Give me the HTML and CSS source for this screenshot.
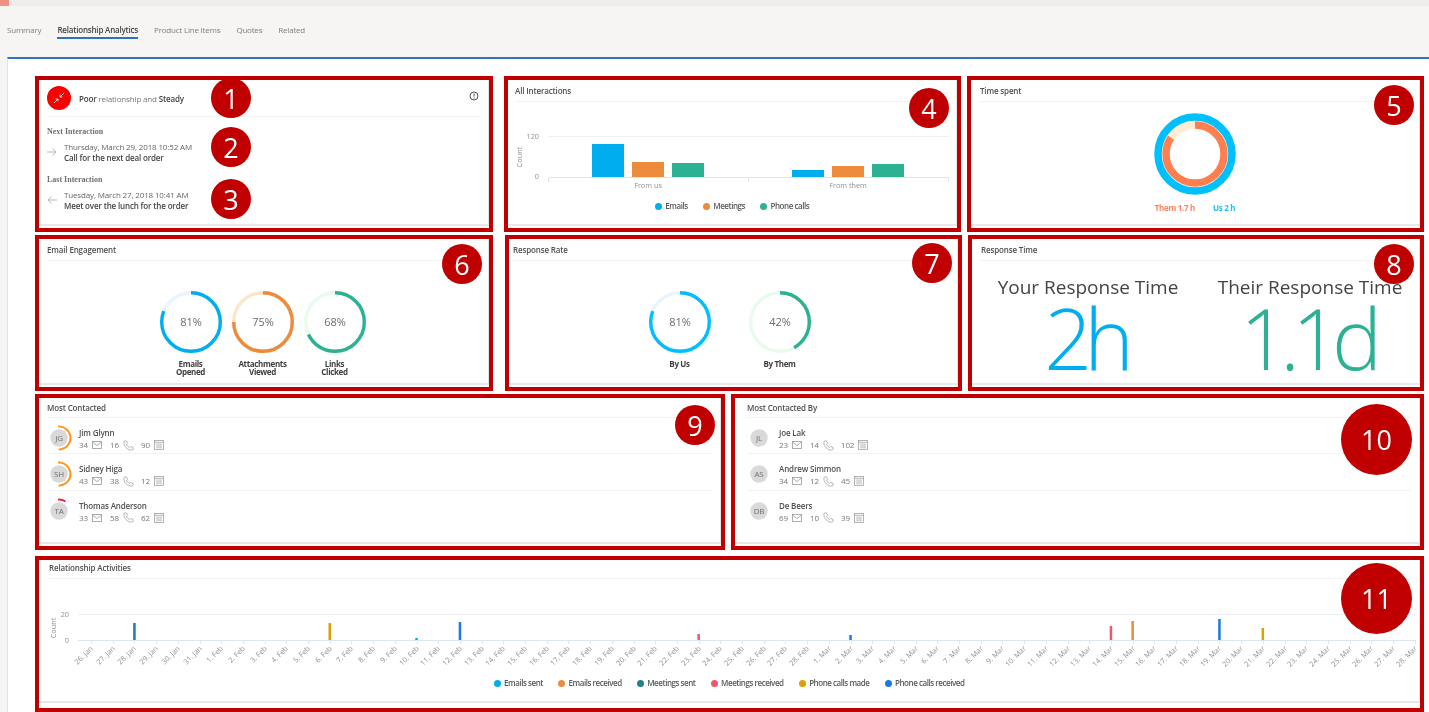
FILE: index.html
```html
<!DOCTYPE html>
<html lang="en">
<head>
    <meta charset="UTF-8">
    <title>Relationship Analytics</title>
    <link rel="stylesheet" href="styles.css">
</head>
<body>

    <svg class="sprite" aria-hidden="true">
        <symbol id="icon-mail" viewBox="0 0 10 8">
            <rect x="0.5" y="0.5" width="9" height="7"></rect>
            <path d="M0.5 1 L5 4.6 L9.5 1"></path>
        </symbol>
        <symbol id="icon-phone" viewBox="0 0 12 12">
            <path d="M2 1 L3.8 1 L5 3.6 L3.8 4.8 C4.5 6.4 5.6 7.5 7.2 8.2 L8.4 7 L11 8.2 L11 10 C11 10.6 10 11 9 11 C5 11 1 7 1 3 C1 2 1.4 1 2 1 Z"></path>
        </symbol>
        <symbol id="icon-calendar" viewBox="0 0 11 11">
            <rect x="0.5" y="0.5" width="10" height="10"></rect>
            <path d="M0.5 2.5 H10.5"></path>
            <path class="calendar-grid" d="M2 4.5 H9 M2 6.5 H9 M2 8.5 H9 M3.5 4 V9 M5.5 4 V9 M7.5 4 V9"></path>
        </symbol>
    </svg>

    <div class="topbar"><span class="topbar-mark"></span></div>

    <nav class="tabs">
        <a>Summary</a>
        <a class="active">Relationship Analytics</a>
        <a>Product Line Items</a>
        <a>Quotes</a>
        <a>Related</a>
    </nav>

    <main class="panel">

        <div class="row row-one">
            <section class="frame frame-health">
                <div class="card">
                    <div class="health-head">
                        <span class="health-icon">
                            <svg width="12" height="12" viewBox="0 0 12 12"><path d="M11 1 L7 5 M7 2.6 V5 H9.4 M1 11 L5 7 M2.6 7 H5 V9.4"></path></svg>
                        </span>
                        <p class="health-text"><b>Poor</b> relationship and <b>Steady</b></p>
                        <svg class="info-icon" width="10" height="10" viewBox="0 0 10 10">
                            <circle cx="5" cy="5" r="4"></circle>
                            <path d="M5 2.6 V5.6 M5 6.6 V7.6"></path>
                        </svg>
                    </div>
                    <h4 class="interaction-label">Next Interaction</h4>
                    <div class="interaction">
                        <svg class="arrow" width="10" height="8" viewBox="0 0 10 8"><path d="M0 4 H9 M5.6 0.5 L9 4 L5.6 7.5"></path></svg>
                        <div>
                            <p class="interaction-date">Thursday, March 29, 2018 10:52 AM</p>
                            <p class="interaction-title">Call for the next deal order</p>
                        </div>
                    </div>
                    <h4 class="interaction-label">Last Interaction</h4>
                    <div class="interaction">
                        <svg class="arrow" width="10" height="8" viewBox="0 0 10 8"><path d="M10 4 H1 M4.4 0.5 L1 4 L4.4 7.5"></path></svg>
                        <div>
                            <p class="interaction-date">Tuesday, March 27, 2018 10:41 AM</p>
                            <p class="interaction-title">Meet over the lunch for the order</p>
                        </div>
                    </div>
                </div>
                <span class="badge badge-1">1</span>
                <span class="badge badge-2">2</span>
                <span class="badge badge-3">3</span>
            </section>

            <section class="frame frame-all">
                <div class="card">
                    <h3 class="card-title">All Interactions</h3>
                    <svg class="chart" width="449" height="99" viewBox="508 103 449 99">
                        <path class="grid" d="M548 137.5 H949"></path>
                        <path class="axis" d="M548 178.5 H949 M548.5 178 V183 M748.5 178 V183 M948.5 178 V183"></path>
                        <rect class="fill-blue" x="592" y="145" width="32" height="33"></rect>
                        <rect class="fill-orange" x="632" y="163" width="32" height="15"></rect>
                        <rect class="fill-green" x="672" y="164" width="32" height="14"></rect>
                        <rect class="fill-blue" x="792" y="171" width="32" height="7"></rect>
                        <rect class="fill-orange" x="832" y="167" width="32" height="11"></rect>
                        <rect class="fill-green" x="872" y="165" width="32" height="13"></rect>
                        <text class="tick" x="539" y="140" text-anchor="end">120</text>
                        <text class="tick" x="539" y="180" text-anchor="end">0</text>
                        <text class="tick" transform="translate(522 158) rotate(-90)" text-anchor="middle">Count</text>
                        <text class="tick" x="648" y="189" text-anchor="middle">From us</text>
                        <text class="tick" x="848" y="189" text-anchor="middle">From them</text>
                    </svg>
                    <ul class="legend">
                        <li><i class="dot bg-blue"></i>Emails</li>
                        <li><i class="dot bg-orange"></i>Meetings</li>
                        <li><i class="dot bg-green"></i>Phone calls</li>
                    </ul>
                </div>
                <span class="badge badge-4">4</span>
            </section>

            <section class="frame frame-time">
                <div class="card">
                    <h3 class="card-title">Time spent</h3>
                    <svg class="donut" width="84" height="84" viewBox="0 0 84 84">
                        <circle class="donut-us" cx="42" cy="42" r="37"></circle>
                        <circle class="donut-track" cx="42" cy="42" r="29"></circle>
                        <circle class="donut-them" cx="42" cy="42" r="29" pathLength="100" stroke-dasharray="84.5 100"></circle>
                    </svg>
                    <div class="time-legend">
                        <span class="time-them">Them 1.7 h</span>
                        <span class="time-us">Us 2 h</span>
                    </div>
                </div>
                <span class="badge badge-5">5</span>
            </section>
        </div>

        <div class="row row-two">
            <section class="frame frame-email">
                <div class="card">
                    <h3 class="card-title">Email Engagement</h3>
                    <div class="gauges">
                        <figure class="gauge">
                            <svg width="62" height="62" viewBox="0 0 62 62">
                                <circle class="gauge-track track-blue" cx="31" cy="31" r="29.3"></circle>
                                <circle class="gauge-value stroke-blue" cx="31" cy="31" r="29.3" pathLength="100" stroke-dasharray="81 100"></circle>
                                <text x="31" y="35">81%</text>
                            </svg>
                            <figcaption>Emails<br>Opened</figcaption>
                        </figure>
                        <figure class="gauge">
                            <svg width="62" height="62" viewBox="0 0 62 62">
                                <circle class="gauge-track track-orange" cx="31" cy="31" r="29.3"></circle>
                                <circle class="gauge-value stroke-orange" cx="31" cy="31" r="29.3" pathLength="100" stroke-dasharray="75 100"></circle>
                                <text x="31" y="35">75%</text>
                            </svg>
                            <figcaption>Attachments<br>Viewed</figcaption>
                        </figure>
                        <figure class="gauge">
                            <svg width="62" height="62" viewBox="0 0 62 62">
                                <circle class="gauge-track track-green" cx="31" cy="31" r="29.3"></circle>
                                <circle class="gauge-value stroke-green" cx="31" cy="31" r="29.3" pathLength="100" stroke-dasharray="68 100"></circle>
                                <text x="31" y="35">68%</text>
                            </svg>
                            <figcaption>Links<br>Clicked</figcaption>
                        </figure>
                    </div>
                </div>
                <span class="badge badge-6">6</span>
            </section>

            <section class="frame frame-rate">
                <div class="card">
                    <h3 class="card-title">Response Rate</h3>
                    <div class="gauges gauges-wide">
                        <figure class="gauge">
                            <svg width="62" height="62" viewBox="0 0 62 62">
                                <circle class="gauge-track track-blue" cx="31" cy="31" r="29.3"></circle>
                                <circle class="gauge-value stroke-sky" cx="31" cy="31" r="29.3" pathLength="100" stroke-dasharray="81 100"></circle>
                                <text x="31" y="35">81%</text>
                            </svg>
                            <figcaption>By Us</figcaption>
                        </figure>
                        <figure class="gauge">
                            <svg width="62" height="62" viewBox="0 0 62 62">
                                <circle class="gauge-track track-green" cx="31" cy="31" r="29.3"></circle>
                                <circle class="gauge-value stroke-green" cx="31" cy="31" r="29.3" pathLength="100" stroke-dasharray="42 100"></circle>
                                <text x="31" y="35">42%</text>
                            </svg>
                            <figcaption>By Them</figcaption>
                        </figure>
                    </div>
                </div>
                <span class="badge badge-7">7</span>
            </section>

            <section class="frame frame-response">
                <div class="card">
                    <h3 class="card-title">Response Time</h3>
                    <div class="response-cols">
                        <div>
                            <p class="response-label">Your Response Time</p>
                            <p class="response-value text-blue">2h</p>
                        </div>
                        <div>
                            <p class="response-label">Their Response Time</p>
                            <p class="response-value text-green">1.1d</p>
                        </div>
                    </div>
                </div>
                <span class="badge badge-8">8</span>
            </section>
        </div>

        <div class="row row-three">
            <section class="frame frame-contacted">
                <div class="card">
                    <h3 class="card-title">Most Contacted</h3>
                    <ul class="people">
                        <li class="person">
                            <svg class="avatar" width="30" height="30" viewBox="0 0 30 30">
                                <circle class="avatar-bg" cx="15" cy="15" r="8.7"></circle>
                                <circle class="avatar-arc arc-orange" cx="15" cy="15" r="11.5" pathLength="100" stroke-dasharray="52 100"></circle>
                                <text x="15" y="18">JG</text>
                            </svg>
                            <div>
                                <p class="person-name">Jim Glynn</p>
                                <div class="stats">
                                    <span class="stat">34<svg width="10" height="8"><use href="#icon-mail"></use></svg></span>
                                    <span class="stat">16<svg width="11" height="11"><use href="#icon-phone"></use></svg></span>
                                    <span class="stat">90<svg width="10" height="10"><use href="#icon-calendar"></use></svg></span>
                                </div>
                            </div>
                        </li>
                        <li class="person">
                            <svg class="avatar" width="30" height="30" viewBox="0 0 30 30">
                                <circle class="avatar-bg" cx="15" cy="15" r="8.7"></circle>
                                <circle class="avatar-arc arc-orange" cx="15" cy="15" r="11.5" pathLength="100" stroke-dasharray="52 100"></circle>
                                <text x="15" y="18">SH</text>
                            </svg>
                            <div>
                                <p class="person-name">Sidney Higa</p>
                                <div class="stats">
                                    <span class="stat">43<svg width="10" height="8"><use href="#icon-mail"></use></svg></span>
                                    <span class="stat">38<svg width="11" height="11"><use href="#icon-phone"></use></svg></span>
                                    <span class="stat">12<svg width="10" height="10"><use href="#icon-calendar"></use></svg></span>
                                </div>
                            </div>
                        </li>
                        <li class="person">
                            <svg class="avatar" width="30" height="30" viewBox="0 0 30 30">
                                <circle class="avatar-bg" cx="15" cy="15" r="8.7"></circle>
                                <circle class="avatar-arc arc-red" cx="15" cy="15" r="11.5" pathLength="100" stroke-dasharray="11 100"></circle>
                                <text x="15" y="18">TA</text>
                            </svg>
                            <div>
                                <p class="person-name">Thomas Anderson</p>
                                <div class="stats">
                                    <span class="stat">33<svg width="10" height="8"><use href="#icon-mail"></use></svg></span>
                                    <span class="stat">58<svg width="11" height="11"><use href="#icon-phone"></use></svg></span>
                                    <span class="stat">62<svg width="10" height="10"><use href="#icon-calendar"></use></svg></span>
                                </div>
                            </div>
                        </li>
                    </ul>
                </div>
                <span class="badge badge-9">9</span>
            </section>

            <section class="frame frame-contacted-by">
                <div class="card">
                    <h3 class="card-title">Most Contacted By</h3>
                    <ul class="people">
                        <li class="person">
                            <svg class="avatar" width="30" height="30" viewBox="0 0 30 30">
                                <circle class="avatar-bg" cx="15" cy="15" r="8.7"></circle>
                                <text x="15" y="18">JL</text>
                            </svg>
                            <div>
                                <p class="person-name">Joe Lak</p>
                                <div class="stats">
                                    <span class="stat">23<svg width="10" height="8"><use href="#icon-mail"></use></svg></span>
                                    <span class="stat">14<svg width="11" height="11"><use href="#icon-phone"></use></svg></span>
                                    <span class="stat">102<svg width="10" height="10"><use href="#icon-calendar"></use></svg></span>
                                </div>
                            </div>
                        </li>
                        <li class="person">
                            <svg class="avatar" width="30" height="30" viewBox="0 0 30 30">
                                <circle class="avatar-bg" cx="15" cy="15" r="8.7"></circle>
                                <text x="15" y="18">AS</text>
                            </svg>
                            <div>
                                <p class="person-name">Andrew Simmon</p>
                                <div class="stats">
                                    <span class="stat">34<svg width="10" height="8"><use href="#icon-mail"></use></svg></span>
                                    <span class="stat">12<svg width="11" height="11"><use href="#icon-phone"></use></svg></span>
                                    <span class="stat">45<svg width="10" height="10"><use href="#icon-calendar"></use></svg></span>
                                </div>
                            </div>
                        </li>
                        <li class="person">
                            <svg class="avatar" width="30" height="30" viewBox="0 0 30 30">
                                <circle class="avatar-bg" cx="15" cy="15" r="8.7"></circle>
                                <text x="15" y="18">DB</text>
                            </svg>
                            <div>
                                <p class="person-name">De Beers</p>
                                <div class="stats">
                                    <span class="stat">69<svg width="10" height="8"><use href="#icon-mail"></use></svg></span>
                                    <span class="stat">10<svg width="11" height="11"><use href="#icon-phone"></use></svg></span>
                                    <span class="stat">39<svg width="10" height="10"><use href="#icon-calendar"></use></svg></span>
                                </div>
                            </div>
                        </li>
                    </ul>
                </div>
                <span class="badge badge-big badge-10">10</span>
            </section>
        </div>

        <div class="row row-four">
            <section class="frame frame-activities">
                <div class="card">
                    <h3 class="card-title">Relationship Activities</h3>
                    <svg id="timeline" class="chart" width="1381" height="99" viewBox="39 579 1381 99">
                        <path class="grid" d="M78 614.5 H1415"></path>
                        <text class="tick" x="69" y="617" text-anchor="end">20</text>
                        <text class="tick" x="69" y="643" text-anchor="end">0</text>
                        <text class="tick" transform="translate(56 628) rotate(-90)" text-anchor="middle">Count</text>
                    </svg>
                    <ul class="legend">
                        <li><i class="dot bg-blue"></i>Emails sent</li>
                        <li><i class="dot bg-orange"></i>Emails received</li>
                        <li><i class="dot bg-teal"></i>Meetings sent</li>
                        <li><i class="dot bg-pink"></i>Meetings received</li>
                        <li><i class="dot bg-amber"></i>Phone calls made</li>
                        <li><i class="dot bg-royal"></i>Phone calls received</li>
                    </ul>
                </div>
                <span class="badge badge-big badge-11">11</span>
            </section>
        </div>

    </main>

    <script src="timeline.js"></script>
</body>
</html>
```

FILE: styles.css
```css
* {
    box-sizing: border-box;
}

html, body {
    margin: 0;
    height: 712px;
    overflow: hidden;
}

body {
    background-color: #f6f5f4;
    font-family: "Open Sans", "Liberation Sans", sans-serif;
    font-size: 8px;
    letter-spacing: -0.15px;
    color: #666;
}

p, h3, h4, ul, figure {
    margin: 0;
    padding: 0;
}

ul {
    list-style: none;
}

.sprite {
    position: absolute;
    width: 0;
    height: 0;
}

.topbar {
    height: 6px;
    background-color: #eeeded;
}

.topbar-mark {
    display: block;
    width: 9px;
    height: 6px;
    background-color: #f0917f;
}

.tabs {
    display: flex;
    gap: 16px;
    height: 51px;
    padding: 18px 0 0 7px;
    letter-spacing: -0.2px;
    color: #808080;
    filter: blur(0.3px);
}

.tabs a {
    height: 15px;
    line-height: 11px;
}

.tabs .active {
    color: #444;
    font-weight: 600;
    border-bottom: 2px solid #2f74b9;
}

.panel {
    height: 655px;
    margin-left: 7px;
    padding: 17px 0 0 27px;
    background-color: #fff;
    border-top: 2px solid #2f74b9;
    border-left: 1px solid #e2e2e2;
    filter: blur(0.3px);
}

.row {
    display: flex;
}

.row-two {
    margin-top: 3px;
}

.row-three {
    margin-top: 3px;
}

.row-four {
    margin-top: 6px;
}

.frame {
    position: relative;
    height: 156px;
    border: 4px solid #c00000;
    background-color: #fff;
    --inset: 8px;
}

.card {
    height: 146px;
    border-bottom: 2px solid #e8e8e8;
    border-right: 1px solid #e6e6e6;
}

.card-title {
    height: 22px;
    margin: 0 8px 0 var(--inset);
    padding: 5px 0 0;
    line-height: 11px;
    font-size: 8px;
    font-weight: 600;
    color: #505050;
    border-bottom: 1px solid #f1f1f1;
}

.frame-health { width: 458px; }
.frame-all { width: 457px; margin-left: 11px; --inset: 7px; }
.frame-time { width: 457px; margin-left: 6px; --inset: 9px; }
.frame-email { width: 458px; }
.frame-rate { width: 457px; margin-left: 12px; --inset: 4px; }
.frame-response { width: 456px; margin-left: 6px; --inset: 9px; }
.frame-contacted { width: 690px; }
.frame-contacted-by { width: 693px; margin-left: 6px; --inset: 12px; }
.frame-activities { width: 1389px; --inset: 10px; }

.frame-contacted .card-title,
.frame-contacted-by .card-title {
    height: 20px;
    padding-top: 4px;
}

.frame-activities .card {
    height: 143px;
}

.frame-activities .card-title {
    height: 19px;
    padding-top: 2px;
}

/* health card */
.health-head {
    display: flex;
    align-items: center;
    gap: 8px;
    height: 37px;
    margin: 0 8px;
    border-bottom: 1px solid #f1f1f1;
}

.health-icon {
    display: flex;
    align-items: center;
    justify-content: center;
    width: 24px;
    height: 24px;
    border-radius: 50%;
    background-color: #f80000;
}

.health-icon path {
    fill: none;
    stroke: #fff;
    stroke-width: 0.8;
}

.health-text {
    flex: 1;
    padding-top: 1px;
    color: #777;
}

.health-text b {
    font-weight: 600;
    color: #444;
}

.info-icon {
    margin: -4px 1px 0 0;
}

.info-icon circle, .info-icon path {
    fill: none;
    stroke: #555;
    stroke-width: 1;
}

.interaction-label {
    height: 10px;
    margin: 10px 0 0 8px;
    line-height: 10px;
    font-family: "Liberation Serif", serif;
    font-size: 8px;
    font-weight: 700;
    letter-spacing: 0;
    color: #707070;
}

.interaction + .interaction-label {
    margin-top: 12px;
}

.interaction {
    display: flex;
    align-items: center;
    gap: 7px;
    margin: 4px 0 0 8px;
}

.arrow path {
    fill: none;
    stroke: #aaa;
    stroke-width: 0.8;
}

.interaction-date, .interaction-title {
    line-height: 11px;
}

.interaction-title {
    font-weight: 600;
    color: #444;
}

/* charts */
.chart {
    display: block;
}

.grid {
    fill: none;
    stroke: #eef0f6;
}

.axis {
    fill: none;
    stroke: #dfe6f3;
}

.tick {
    font-size: 7.3px;
    letter-spacing: 0;
    fill: #909090;
}

.fill-blue { fill: #00aeef; }
.fill-orange { fill: #ec8b3c; }
.fill-green { fill: #2db193; }
.fill-teal { fill: #257f92; }
.fill-pink { fill: #f0566a; }
.fill-amber { fill: #dca000; }
.fill-royal { fill: #1a7ae0; }

.legend {
    display: flex;
    justify-content: center;
    gap: 15px;
    height: 10px;
    font-weight: 600;
    line-height: 10px;
    letter-spacing: -0.45px;
    color: #5a5a5a;
}

.legend li {
    display: flex;
    align-items: center;
    gap: 3.5px;
}

.dot {
    width: 7px;
    height: 7px;
    border-radius: 50%;
}

.bg-blue { background-color: #00aeef; }
.bg-orange { background-color: #ec8b3c; }
.bg-green { background-color: #2db193; }
.bg-teal { background-color: #257f92; }
.bg-pink { background-color: #f0566a; }
.bg-amber { background-color: #dca000; }
.bg-royal { background-color: #1a7ae0; }

/* time spent */
.donut {
    display: block;
    margin: 10px auto 0;
}

.donut circle {
    fill: none;
    transform: rotate(-90deg);
    transform-origin: center;
}

.donut-us {
    stroke: #00bfff;
    stroke-width: 7.5;
}

.donut-track {
    stroke: #ffecd2;
    stroke-width: 7.4;
}

.donut-them {
    stroke: #ff7f50;
    stroke-width: 7.4;
}

.time-legend {
    display: flex;
    justify-content: center;
    gap: 18px;
    margin-top: 7px;
    font-size: 8px;
    font-weight: 700;
    line-height: 10px;
    letter-spacing: -0.3px;
}

.time-them { color: #ff8560; }
.time-us { color: #1fbfff; }

/* gauges */
.gauges {
    display: flex;
    justify-content: center;
    gap: 10px;
    margin-left: -2px;
    padding-top: 30px;
}

.gauges-wide {
    gap: 38px;
    margin-left: -7px;
}

.gauge {
    width: 62px;
}

.gauge svg {
    display: block;
}

.gauge circle {
    fill: none;
    stroke-width: 3.4;
    transform: rotate(-90deg);
    transform-origin: center;
}

.gauge text {
    font-size: 11px;
    letter-spacing: 0;
    fill: #6d6d6d;
    text-anchor: middle;
}

.gauge figcaption {
    margin-top: 7px;
    font-weight: 700;
    line-height: 8px;
    letter-spacing: -0.35px;
    text-align: center;
    white-space: nowrap;
    color: #3f3f3f;
}

.track-blue { stroke: #e9f5fd; }
.track-orange { stroke: #fde5c9; }
.track-green { stroke: #e8fbec; }
.stroke-blue { stroke: #00aeef; }
.stroke-sky { stroke: #00bfff; }
.stroke-orange { stroke: #ec8b3c; }
.stroke-green { stroke: #2db193; }

/* response time */
.response-cols {
    display: grid;
    grid-template-columns: 222px 222px;
    padding: 13px 0 0 5px;
    text-align: center;
}

.response-label {
    font-size: 19px;
    line-height: 26px;
    letter-spacing: 0;
    color: #444;
    white-space: nowrap;
}

.response-value {
    margin-top: -2px;
    font-size: 84px;
    line-height: 80px;
    font-weight: 300;
    letter-spacing: -8px;
    text-indent: -6px;
}

.text-blue { color: #00aeef; }
.text-green { color: #2db193; }

/* people lists */
.people {
    margin: 0 8px 0 var(--inset);
}

.person {
    display: flex;
    height: 36.4px;
    gap: 5px;
    padding-top: 9px;
    border-bottom: 1px solid #f3f3f3;
}

.person:last-child {
    border-bottom: none;
}

.avatar {
    margin: -4px 0 0 -3px;
}

.avatar-bg {
    fill: #d9d9d9;
}

.avatar-arc {
    fill: none;
    stroke-width: 2;
    transform: rotate(-95deg);
    transform-origin: center;
}

.arc-orange { stroke: #ff9a1f; }
.arc-red { stroke: #f5234a; }

.avatar text {
    font-size: 8px;
    fill: #6f6f6f;
    text-anchor: middle;
}

.person-name {
    line-height: 11px;
    font-weight: 600;
    color: #505050;
}

.stats {
    display: flex;
    margin-top: 1px;
    line-height: 12px;
    color: #777;
}

.stat {
    display: flex;
    align-items: center;
    gap: 4px;
    width: 31px;
    white-space: nowrap;
}

.stat svg {
    fill: none;
    stroke: #999;
    stroke-width: 0.8;
    flex: none;
}

.calendar-grid {
    stroke: #c4c4c4;
}

/* numbered markers */
.badge {
    position: absolute;
    display: flex;
    align-items: center;
    justify-content: center;
    width: 40px;
    height: 40px;
    border-radius: 50%;
    background-color: #c00000;
    color: #fff;
    font-size: 27px;
    letter-spacing: 0;
}

.badge-big {
    width: 71px;
    height: 71px;
}

.badge-1 { left: 172px; top: -2px; }
.badge-2 { left: 172px; top: 47px; }
.badge-3 { left: 172px; top: 99px; }
.badge-4 { left: 401px; top: 8px; }
.badge-5 { left: 403px; top: 5px; }
.badge-6 { left: 403px; top: 5px; }
.badge-7 { left: 403px; top: 4px; }
.badge-8 { left: 402px; top: 5px; }
.badge-9 { left: 636px; top: 7px; }
.badge-10 { left: 606px; top: 6px; }
.badge-11 { left: 1302px; top: 3px; }
```

FILE: timeline.js
```js
// axis ticks and bars of the Relationship Activities chart
const NS = 'http://www.w3.org/2000/svg';
const chart = document.getElementById('timeline');

const startX = 91;
const stepX = 21.7;
const baseY = 640;

const months = [
    { name: 'Jan', from: 26, to: 31 },
    { name: 'Feb', from: 1, to: 28 },
    { name: 'Mar', from: 1, to: 28 }
];

// index is the day counted from 26. Jan
const bars = [
    { index: 2, top: 623, cls: 'fill-teal' },
    { index: 11, top: 623, cls: 'fill-amber' },
    { index: 15, top: 638, cls: 'fill-blue' },
    { index: 17, top: 622, cls: 'fill-royal' },
    { index: 28, top: 634, cls: 'fill-pink' },
    { index: 35, top: 635, cls: 'fill-royal' },
    { index: 47, top: 626, cls: 'fill-pink' },
    { index: 48, top: 621, cls: 'fill-orange' },
    { index: 52, top: 619, cls: 'fill-royal' },
    { index: 54, top: 628, cls: 'fill-amber' }
];

function add(tag, attrs, text) {
    const el = document.createElementNS(NS, tag);
    Object.keys(attrs).forEach(key => el.setAttribute(key, attrs[key]));
    if (text) {
        el.textContent = text;
    }
    chart.appendChild(el);
}

let ticks = `M78 ${baseY + 0.5} H1415`;
let i = 0;

months.forEach(month => {
    for (let day = month.from; day <= month.to; day++) {
        const x = Math.round(startX + i * stepX) + 0.5;
        ticks += ` M${x} ${baseY} V${baseY + 4}`;
        add('text', {
            class: 'tick',
            'text-anchor': 'end',
            transform: `translate(${x + 2} ${baseY + 9}) rotate(-45)`
        }, `${day}. ${month.name}`);
        i++;
    }
});

add('path', { class: 'axis', d: ticks });

bars.forEach(bar => {
    add('rect', {
        class: bar.cls,
        x: startX + bar.index * stepX - 1.2,
        y: bar.top,
        width: 2.5,
        height: baseY - bar.top
    });
});
```
